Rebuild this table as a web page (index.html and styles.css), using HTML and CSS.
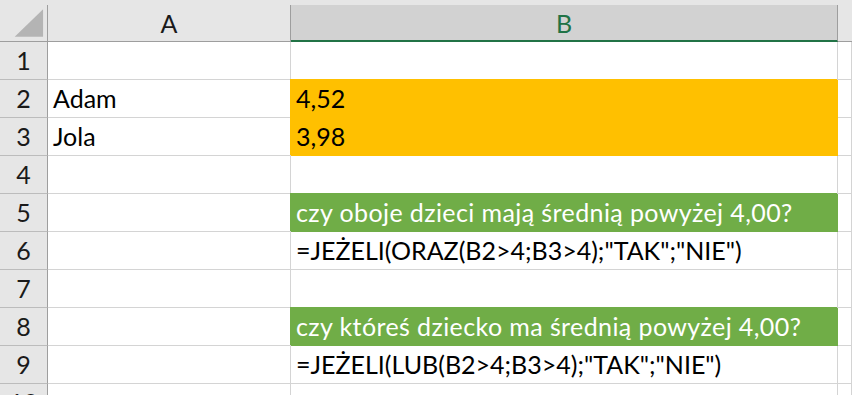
FILE: index.html
```html
<!DOCTYPE html>
<html lang="pl">
<head>
<meta charset="utf-8">
<title>Arkusz</title>
<link rel="stylesheet" href="styles.css">
</head>
<body>
<div class="sheet">
  <div class="topbar"></div>
  <div class="grid">
    <div class="corner">
      <svg class="corner-tri" width="48" height="36" viewBox="0 0 48 36"><polygon points="15,32 44,32 44,4" fill="#b4b4b4"/></svg>
    </div>
    <div class="colhead">A</div>
    <div class="colhead sel">B</div>
    <div class="colhead rest"></div>

    <div class="rowhead">1</div><div class="cell"></div><div class="cell"></div><div class="cell"></div>
    <div class="rowhead">2</div><div class="cell">Adam</div><div class="cell fill-yellow">4,52</div><div class="cell"></div>
    <div class="rowhead">3</div><div class="cell">Jola</div><div class="cell fill-yellow">3,98</div><div class="cell"></div>
    <div class="rowhead">4</div><div class="cell"></div><div class="cell"></div><div class="cell"></div>
    <div class="rowhead">5</div><div class="cell"></div><div class="cell fill-green">czy oboje dzieci mają średnią powyżej 4,00?</div><div class="cell"></div>
    <div class="rowhead">6</div><div class="cell"></div><div class="cell">=JEŻELI(ORAZ(B2&gt;4;B3&gt;4);"TAK";"NIE")</div><div class="cell"></div>
    <div class="rowhead">7</div><div class="cell"></div><div class="cell"></div><div class="cell"></div>
    <div class="rowhead">8</div><div class="cell"></div><div class="cell fill-green">czy któreś dziecko ma średnią powyżej 4,00?</div><div class="cell"></div>
    <div class="rowhead">9</div><div class="cell"></div><div class="cell">=JEŻELI(LUB(B2&gt;4;B3&gt;4);"TAK";"NIE")</div><div class="cell"></div>
    <div class="rowhead">10</div><div class="cell"></div><div class="cell"></div><div class="cell"></div>
  </div>
</div>
</body>
</html>
```

FILE: styles.css
```css
html, body {
  margin: 0;
  padding: 0;
  background: #ffffff;
  overflow: hidden;
}

.sheet {
  width: 852px;
  height: 395px;
  overflow: hidden;
  font-family: "Lato", "Liberation Sans", sans-serif;
  font-size: 25px;
  color: #000;
}

.topbar {
  height: 5px;
  background: #e6e6e6;
}

.grid {
  display: grid;
  grid-template-columns: 48px 243px 547px 1fr;
  grid-template-rows: 37px repeat(10, 38px);
}

.grid > div {
  box-sizing: border-box;
  display: flex;
  align-items: flex-end;
  white-space: nowrap;
  line-height: 24px;
}

.corner {
  background: #e6e6e6;
  border-right: 1px solid #9e9e9e;
  border-bottom: 1px solid #9e9e9e;
}

.corner-tri {
  display: block;
}

.colhead {
  background: #e6e6e6;
  border-right: 1px solid #9e9e9e;
  border-bottom: 1px solid #9e9e9e;
  justify-content: center;
  padding-bottom: 6px;
  color: #1a1a1a;
}

.colhead.sel {
  background: #d2d2d2;
  color: #217346;
  border-bottom: 2px solid #217346;
  padding-bottom: 5px;
}

.colhead.rest {
  border-right: none;
}

.rowhead {
  background: #e6e6e6;
  border-right: 1px solid #9e9e9e;
  border-bottom: 1px solid #bcbcbc;
  justify-content: center;
  padding-bottom: 7px;
  color: #1a1a1a;
}

.cell {
  border-right: 1px solid #d4d4d4;
  border-bottom: 1px solid #d4d4d4;
  padding: 0 4px 7px 5px;
}

.fill-yellow {
  background: #ffc000;
  border-color: #ffc000;
  box-shadow: -1px -1px 0 0 #ffc000;
}

.fill-green {
  background: #70ad47;
  border-color: #70ad47;
  box-shadow: -1px -1px 0 0 #70ad47;
  color: #ffffff;
  letter-spacing: 0.4px;
}
```
